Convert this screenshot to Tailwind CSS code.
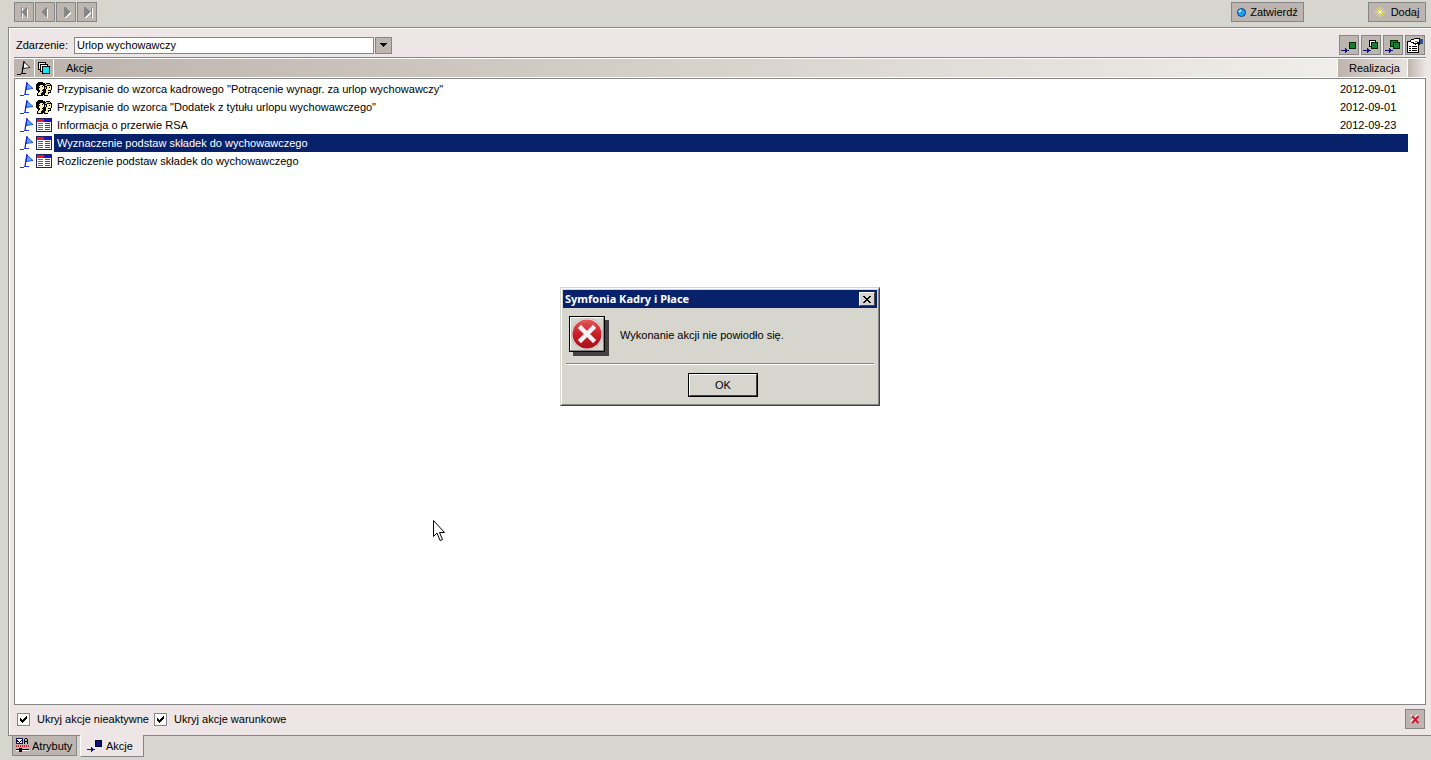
<!DOCTYPE html>
<html lang="pl">
<head>
    <meta charset="UTF-8">
    <meta name="viewport" content="width=device-width, initial-scale=1.0">
    <title>Symfonia Kadry i Płace</title>
    <script src="https://cdn.jsdelivr.net/npm/@tailwindcss/browser@4"></script>
</head>
<body class="bg-[#d6d6ce] text-black text-[11px] leading-[14px] font-['Liberation_Sans',Arial,sans-serif]">

    <!-- Icon sprites -->
    <svg class="hidden">
        <symbol id="flag" viewBox="0 0 14 14">
            <path d="M7 1L13 6.500L6 7.500z" fill="#46b4f0" stroke="#1428c8" stroke-width=".8"/>
            <path d="M7 0L5 12" stroke="#1414d2" stroke-width="1.200"/>
            <path d="M0 13h4v1H0z M4 12h5v1H4z" fill="#1e3cdc"/>
        </symbol>
        <symbol id="people" viewBox="0 0 16 14">
            <path d="M2 0h5v1h2v1h1v-1h4v1h1v1h1v5h-1v3h-2v1h-1v2h-4v-1h-1v1H1v-3h1V9H1V8H0V2h1V1h1z" fill="#000"/>
            <path d="M4 3h3v1h-3z M3 4h5v2H3z M3 6h5v1H3z M3 7h4v1H3z M4 8h3v2H4z M3 10h3v1H3z M2 11h3v2H2z" fill="#f5f0a8"/>
            <path d="M11 4h4v4h-5V6h1z M10 8h4v2h-4z M10 10h2v1h-2z M9 11h3v2H9z" fill="#f5f0a8"/>
            <path d="M10 2h4v1h-4z M9 3h2v1H9z M9 5h1v2H9z" fill="#d2c878"/>
            <path d="M6 4h1v1H6z M13 5h1v1h-1z M6 8h1v1H6z M12 8h2v1h-2z M3 5h1v1H3z M10 6h1v1h-1z" fill="#000"/>
        </symbol>
        <symbol id="form" viewBox="0 0 16 14">
            <path d="M0 0h16v14H0z" fill="#202060"/>
            <path d="M1 1h7v3H1z" fill="#f01428"/>
            <path d="M8 1h7v3H8z" fill="#1414dc"/>
            <path d="M1 4h14v9H1z" fill="#fff"/>
            <path d="M2 5h5v1H2z M2 7h5v1H2z M2 9h5v1H2z M2 11h5v1H2z" fill="#d23c50"/>
            <path d="M9 5h5v1H9z M9 7h5v1H9z M9 9h5v1H9z M9 11h5v1H9z" fill="#3c3cc8"/>
        </symbol>
        <symbol id="arrow" viewBox="0 0 8 5">
            <path d="M0 2h7v1H0z M4 0h1v1h1v3h-1v1h-1z M7 2h1v1h-1z" fill="#10108c"/>
        </symbol>
    </svg>

    <div class="min-h-screen flex flex-col">

        <!-- Top toolbar -->
        <header class="h-[27px] flex items-start pt-[2px] pl-[14px] pr-[5px]">
            <nav class="flex gap-px">
                <button type="button" aria-label="Pierwszy" class="size-5 border border-[#868686] bg-[#bdb5b0] grid place-items-center">
                    <svg class="size-4" viewBox="0 0 16 16" shape-rendering="crispEdges"><path d="M6 4h1v10H6z M12 4v10h-1L7 9z" fill="#fff"/><path d="M5 3h1v10H5z M11 3v10h-1L6 8l4-5z" fill="#868686"/></svg>
                </button>
                <button type="button" aria-label="Poprzedni" class="size-5 border border-[#868686] bg-[#bdb5b0] grid place-items-center">
                    <svg class="size-4" viewBox="0 0 16 16" shape-rendering="crispEdges"><path d="M11 4v10h-1L6 9z" fill="#fff"/><path d="M10 3v10H9L5 8l4-5z" fill="#868686"/></svg>
                </button>
                <button type="button" aria-label="Następny" class="size-5 border border-[#868686] bg-[#bdb5b0] grid place-items-center">
                    <svg class="size-4" viewBox="0 0 16 16" shape-rendering="crispEdges"><path d="M7 4v10h1l5-5-5-5z" fill="#fff"/><path d="M6 3v10h1l5-5-5-5z" fill="#868686"/></svg>
                </button>
                <button type="button" aria-label="Ostatni" class="size-5 border border-[#868686] bg-[#bdb5b0] grid place-items-center">
                    <svg class="size-4" viewBox="0 0 16 16" shape-rendering="crispEdges"><path d="M6 4v10h1l5-5-5-5z M13 4h1v10h-1z" fill="#fff"/><path d="M5 3v10h1l5-5-5-5z M12 3h1v10h-1z" fill="#868686"/></svg>
                </button>
            </nav>
            <div class="ml-auto flex gap-16">
                <button type="button" class="h-5 w-[73px] border border-[#868686] bg-[#bdb5b0] flex items-center justify-center gap-1">
                    <svg class="size-[9px]" viewBox="0 0 9 9"><circle cx="4.500" cy="4.500" r="4" fill="#1ea0f0" stroke="#103c8c"/><path d="M2 4L4 2" stroke="#b4f5ff" stroke-width="2"/></svg>
                    Zatwierdź
                </button>
                <button type="button" class="h-5 w-[58px] border border-[#868686] bg-[#bdb5b0] flex items-center justify-center gap-[6px]">
                    <svg class="size-[10px]" viewBox="0 0 10 10"><path d="M5 0v10M0 5h10M1.500 1.500l7 7M8.500 1.500l-7 7" stroke="#f5eb50"/><circle cx="5" cy="5" r="1.500" fill="#fffbb0"/></svg>
                    Dodaj
                </button>
            </div>
        </header>

        <!-- Actions panel -->
        <main class="ml-2 flex-1 flex flex-col border-l border-y border-[#868686] bg-[#eee6e6]">
            <div class="flex-1 flex flex-col border-l border-t border-white pl-1 pr-[5px]">

                <div class="h-[28px] flex items-center pt-1 pl-[2px] pr-px">
                    <label for="zdarzenie" class="w-[58px]">Zdarzenie:</label>
                    <select id="zdarzenie" class="appearance-none w-[300px] h-[17px] border border-[#868686] bg-white pl-[2px] leading-[14px] outline-none">
                        <option>Urlop wychowawczy</option>
                    </select>
                    <button type="button" aria-label="Rozwiń" class="ml-px w-[17px] h-[17px] border border-[#868686] bg-[#bdb5b0] grid place-items-center">
                        <svg class="w-[7px] h-1" viewBox="0 0 7 4" shape-rendering="crispEdges"><path d="M0 0h7v1h-1v1h-1v1h-1v1h-1v-1h-1v-1h-1v-1h-1z"/></svg>
                    </button>
                    <div class="ml-auto flex gap-[2px]">
                        <button type="button" aria-label="Wykonaj akcję" class="size-5 border border-[#868686] bg-[#bdb5b0]">
                            <svg class="size-[18px]" viewBox="0 0 18 18" shape-rendering="crispEdges"><path d="M9 6h7v7H9z" fill="#002800"/><path d="M10 7h5v5h-5z" fill="#108232"/><use href="#arrow" x="1" y="12" width="8" height="5"/></svg>
                        </button>
                        <button type="button" aria-label="Wykonaj zaznaczone" class="size-5 border border-[#868686] bg-[#bdb5b0]">
                            <svg class="size-[18px]" viewBox="0 0 18 18" shape-rendering="crispEdges"><path d="M7 4h7v7H7z"/><path d="M8 5h5v5H8z" fill="#fff"/><path d="M9 6h7v7H9z" fill="#002800"/><path d="M10 7h5v5h-5z" fill="#108232"/><use href="#arrow" x="1" y="12" width="8" height="5"/></svg>
                        </button>
                        <button type="button" aria-label="Wykonaj wszystkie" class="size-5 border border-[#868686] bg-[#bdb5b0]">
                            <svg class="size-[18px]" viewBox="0 0 18 18" shape-rendering="crispEdges"><path d="M6 4h8v7H6z" fill="#002800"/><path d="M7 5h6v5H7z" fill="#108232"/><path d="M9 6h7v7H9z" fill="#002800"/><path d="M10 7h5v5h-5z" fill="#108232"/><use href="#arrow" x="1" y="12" width="8" height="5"/></svg>
                        </button>
                        <button type="button" aria-label="Właściwości" class="size-5 border border-[#868686] bg-[#bdb5b0]">
                            <svg class="size-[18px]" viewBox="0 0 18 18" shape-rendering="crispEdges">
                                <path d="M1 5h12v12H1z"/><path d="M2 6h10v10H2z" fill="#fff"/>
                                <path d="M3 10h2v1H3z M6 10h5v1H6z M3 12h2v1H3z M6 12h5v1H6z M3 14h2v1H3z M6 14h5v1H6z"/>
                                <path d="M4 4h1V3h3V2h6v7h-2V8h-2v1H9V8H7V7H5V6H4z"/>
                                <path d="M5 4h3V3h5v3h-2v1H8V6H5z" fill="#fff"/>
                                <path d="M9 5h3v1H9z" fill="#868686"/>
                                <path d="M14 3h3v5h-3z" fill="#28508c"/>
                            </svg>
                        </button>
                    </div>
                </div>

                <div class="flex-1 border-x border-b border-[#868686] bg-white">
                    <table class="table-fixed border-separate border-spacing-0 w-[calc(100%+2px)] -mx-px">
                        <colgroup>
                            <col class="w-[21px]"><col class="w-[19px]"><col><col class="w-[70px]"><col class="w-[18px]">
                        </colgroup>
                        <thead>
                            <tr class="h-[22px] text-left">
                                <th class="p-0 border-t border-b border-[#868686] bg-[#bdb5ad]">
                                    <div class="h-5 border-y border-r border-white grid place-items-center">
                                        <svg class="size-[14px]" viewBox="0 0 14 14"><path d="M7 1L13 6.500L6 7.500z" fill="#fff" stroke="#000" stroke-width=".8"/><path d="M7 0L5 12" stroke="#000" stroke-width="1.200"/><path d="M0 13h4v1H0z M4 12h5v1H4z"/></svg>
                                    </div>
                                </th>
                                <th class="p-0 border-t border-b border-[#868686] bg-[#bdb5ad]">
                                    <div class="h-5 border-y border-r border-white grid place-items-center">
                                        <svg class="size-3" viewBox="0 0 12 12" shape-rendering="crispEdges"><path d="M0 0h8v8H0z"/><path d="M1 1h6v6H1z" fill="#fff8b0"/><path d="M2 2h8v8H2z"/><path d="M3 3h6v6H3z" fill="#fff8b0"/><path d="M4 4h8v8H4z"/><path d="M5 5h6v6H5z" fill="#10e6f5"/></svg>
                                    </div>
                                </th>
                                <th class="p-0 border-t border-b border-[#868686] font-normal bg-linear-to-r from-[#bdb5ad] to-[#f0eeea]">
                                    <div class="h-5 border-y border-r border-white pl-3 leading-[18px]">Akcje</div>
                                </th>
                                <th class="p-0 border-t border-b border-[#868686] font-normal bg-linear-to-r from-[#bdb5ad] to-[#e8e4de]">
                                    <div class="h-5 border-y border-r border-white pl-[11px] leading-[18px]">Realizacja</div>
                                </th>
                                <th class="p-0 border-t border-b border-[#868686] bg-linear-to-r from-[#bdb5ad] to-[#eee6e6]"><div class="h-5 border-y border-white"></div></th>
                            </tr>
                        </thead>
                        <tbody>
                            <tr class="h-px" aria-hidden="true"><td colspan="5" class="p-0"></td></tr>
                            <tr class="h-[18px]">
                                <td class="p-0 pl-[6px]"><svg class="size-[14px]"><use href="#flag"/></svg></td>
                                <td class="p-0 pl-px"><svg class="w-4 h-[14px]" shape-rendering="crispEdges"><use href="#people"/></svg></td>
                                <td class="p-0 pl-[3px]">Przypisanie do wzorca kadrowego "Potrącenie wynagr. za urlop wychowawczy"</td>
                                <td class="p-0 pl-[2px]">2012-09-01</td>
                                <td class="p-0"></td>
                            </tr>
                            <tr class="h-[18px]">
                                <td class="p-0 pl-[6px]"><svg class="size-[14px]"><use href="#flag"/></svg></td>
                                <td class="p-0 pl-px"><svg class="w-4 h-[14px]" shape-rendering="crispEdges"><use href="#people"/></svg></td>
                                <td class="p-0 pl-[3px]">Przypisanie do wzorca "Dodatek z tytułu urlopu wychowawczego"</td>
                                <td class="p-0 pl-[2px]">2012-09-01</td>
                                <td class="p-0"></td>
                            </tr>
                            <tr class="h-[18px]">
                                <td class="p-0 pl-[6px]"><svg class="size-[14px]"><use href="#flag"/></svg></td>
                                <td class="p-0 pl-px"><svg class="w-4 h-[14px]" shape-rendering="crispEdges"><use href="#form"/></svg></td>
                                <td class="p-0 pl-[3px]">Informacja o przerwie RSA</td>
                                <td class="p-0 pl-[2px]">2012-09-23</td>
                                <td class="p-0"></td>
                            </tr>
                            <tr class="h-[18px]">
                                <td class="p-0 pl-[6px]"><svg class="size-[14px]"><use href="#flag"/></svg></td>
                                <td class="p-0 pl-px"><svg class="w-4 h-[14px]" shape-rendering="crispEdges"><use href="#form"/></svg></td>
                                <td class="p-0 pl-[3px] bg-[#08216b] text-white">Wyznaczenie podstaw składek do wychowawczego</td>
                                <td class="p-0 pl-[2px] bg-[#08216b]"></td>
                                <td class="p-0"></td>
                            </tr>
                            <tr class="h-[18px]">
                                <td class="p-0 pl-[6px]"><svg class="size-[14px]"><use href="#flag"/></svg></td>
                                <td class="p-0 pl-px"><svg class="w-4 h-[14px]" shape-rendering="crispEdges"><use href="#form"/></svg></td>
                                <td class="p-0 pl-[3px]">Rozliczenie podstaw składek do wychowawczego</td>
                                <td class="p-0 pl-[2px]"></td>
                                <td class="p-0"></td>
                            </tr>
                        </tbody>
                    </table>
                </div>

                <!-- Filters -->
                <div class="h-[30px] flex items-center pl-[3px] pr-px pb-[2px]">
                    <label class="flex items-center w-[137px] gap-[7px] whitespace-nowrap">
                        <span class="grid place-items-center">
                            <input type="checkbox" checked class="col-start-1 row-start-1 appearance-none size-[13px] border border-[#868686] bg-white">
                            <svg class="col-start-1 row-start-1 size-[7px] pointer-events-none" viewBox="0 0 7 7" shape-rendering="crispEdges"><path d="M0 2h1v1h1v1h1v-1h1v-1h1v-1h1v-1h1v3h-1v1h-1v1h-1v1h-1v1h-1v-1h-1v-1h-1z"/></svg>
                        </span>
                        Ukryj akcje nieaktywne
                    </label>
                    <label class="flex items-center gap-[7px] whitespace-nowrap">
                        <span class="grid place-items-center">
                            <input type="checkbox" checked class="col-start-1 row-start-1 appearance-none size-[13px] border border-[#868686] bg-white">
                            <svg class="col-start-1 row-start-1 size-[7px] pointer-events-none" viewBox="0 0 7 7" shape-rendering="crispEdges"><path d="M0 2h1v1h1v1h1v-1h1v-1h1v-1h1v-1h1v3h-1v1h-1v1h-1v1h-1v1h-1v-1h-1v-1h-1z"/></svg>
                        </span>
                        Ukryj akcje warunkowe
                    </label>
                    <button type="button" aria-label="Usuń" class="ml-auto size-5 border border-[#868686] bg-[#bdb5b0] grid place-items-center">
                        <svg class="size-[10px]" viewBox="0 0 10 10"><path d="M1 1l7 7M8 1L1 8" stroke="#fff" stroke-width="2"/><path d="M2 2l6.500 7M8.500 2L2 9" stroke="#d2142d" stroke-width="2"/></svg>
                    </button>
                </div>
            </div>
        </main>

        <!-- Bottom tabs -->
        <footer class="h-6 flex items-start gap-[3px] pl-3">
            <button type="button" class="h-5 w-[65px] border border-t-0 border-[#868686] bg-[#bdb5b0] flex items-center gap-[3px] pl-[3px]">
                <svg class="w-[13px] h-[15px] shrink-0" viewBox="0 0 13 15" shape-rendering="crispEdges">
                    <path d="M0 0h7v6H0z" fill="#101060"/><path d="M1 1h5v4H1z" fill="#fff"/><path d="M1 2h1v1h1v1h1v-1h1v-1h1v1h-1v1h-1v1h-1v-1h-2z"/>
                    <path d="M9 0h2v1h1v5h-1v-2h-2v2h-1v-5h1z M9 1v2h2v-2z" fill-rule="evenodd"/>
                    <path d="M0 7h1v2H0z M2 7h1v2H2z M4 7h1v2H4z M6 7h1v2H6z M8 7h1v2H8z M10 7h1v2h-1z M12 7h1v2h-1z" fill="#dc1e32"/>
                    <path d="M0 11h13v1H0z"/><path d="M0 12h13v1H0z" fill="#fff"/><path d="M3 10h3v4H3z"/>
                </svg>
                Atrybuty
            </button>
            <button type="button" class="relative -mt-px h-[22px] w-16 border-l border-l-white border-r border-b border-r-[#868686] border-b-[#868686] bg-[#eee6e6] flex items-center gap-[3px] pl-[6px]">
                <svg class="w-4 h-3 shrink-0" viewBox="0 0 16 12" shape-rendering="crispEdges"><path d="M8 0h7v7H8z" fill="#000030"/><path d="M9 1h5v5H9z" fill="#10107a"/><use href="#arrow" x="0" y="7" width="8" height="5"/></svg>
                Akcje
            </button>
        </footer>
    </div>

    <!-- Error dialog -->
    <div role="alertdialog" aria-labelledby="dlg-title" class="absolute left-[560px] top-[287px] w-80 h-[119px] border border-t-[#d6d6ce] border-l-[#d6d6ce] border-r-[#424242] border-b-[#424242] bg-[#d6d6ce]">
        <div class="h-full border border-t-white border-l-white border-r-[#868686] border-b-[#868686] p-px flex flex-col">
            <div class="h-[18px] bg-[#08216b] flex items-center justify-between pl-[2px] pr-[2px]">
                <h1 id="dlg-title" class="text-white font-bold font-['Noto_Sans',sans-serif]">Symfonia Kadry i Płace</h1>
                <button type="button" aria-label="Zamknij" class="w-4 h-[14px] border border-t-white border-l-white border-r-[#424242] border-b-[#424242] bg-[#d6d6ce] grid place-items-center">
                    <svg class="w-2 h-[7px]" viewBox="0 0 8 7" shape-rendering="crispEdges"><path d="M0 0h2v1h1v1h2v-1h1v-1h2v1h-1v1h-1v1h-1v1h1v1h1v1h1v1h-2v-1h-1v-1h-2v1h-1v1h-2v-1h1v-1h1v-1h1v-1h-1v-1h-1v-1h-1z"/></svg>
                </button>
            </div>
            <div class="h-[55px] pt-2 pl-[6px] flex gap-[15px]">
                <div class="size-9 border border-black bg-[#d6d6ce] shadow-[4px_4px_0_#424242]">
                    <svg class="size-[34px] border border-l-white border-t-white border-r-[#868686] border-b-[#868686]" viewBox="0 0 32 32">
                        <defs><linearGradient id="red" x1="0" y1="0" x2="0" y2="1"><stop offset="0" stop-color="#e65a5a"/><stop offset=".5" stop-color="#c81e28"/><stop offset="1" stop-color="#aa0f19"/></linearGradient></defs>
                        <circle cx="16" cy="16" r="16" fill="#a8a8a8"/><circle cx="16" cy="16" r="15.500" fill="#e8e8e8"/><circle cx="16" cy="16" r="14.500" fill="url(#red)"/>
                        <path d="M10 10l12 12M22 10L10 22" stroke="#f4f4f4" stroke-width="4.500" stroke-linecap="square"/>
                    </svg>
                </div>
                <p class="pt-3">Wykonanie akcji nie powiodło się.</p>
            </div>
            <hr class="mx-[3px] h-[2px] border-0 border-t border-t-[#868686] bg-white">
            <button type="button" class="mt-2 ml-[125px] w-[70px] h-6 border border-black bg-[#d6d6ce]">
                <span class="size-full grid place-items-center border border-t-white border-l-white border-r-[#424242] border-b-[#424242]">OK</span>
            </button>
        </div>
    </div>

    <!-- Mouse pointer -->
    <svg class="absolute left-[433px] top-[520px] w-3 h-[21px] pointer-events-none" viewBox="0 0 12 21"><path d="M.5.500v16l3.500-3.500 3 7.500 2.500-1-3-7h5z" fill="#fff" stroke="#000"/></svg>

</body>
</html>
